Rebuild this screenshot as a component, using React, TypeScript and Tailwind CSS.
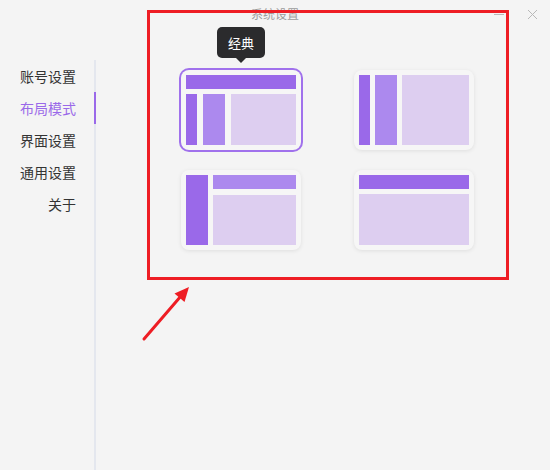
import { useState } from "react";

type Layout = "classic" | "columns" | "side" | "top";

const navItems = ["账号设置", "布局模式", "界面设置", "通用设置", "关于"];

function LayoutPreview({ kind }: { kind: Layout }) {
  if (kind === "classic") {
    return (
      <div className="flex flex-col gap-[5px] w-full h-full">
        <div className="h-[14px] bg-[#9a69e9]" />
        <div className="flex flex-1 gap-[6px]">
          <div className="w-[11px] bg-[#9a69e9]" />
          <div className="w-[22px] bg-[#ac89ee]" />
          <div className="flex-1 bg-[#ddcef0]" />
        </div>
      </div>
    );
  }
  if (kind === "columns") {
    return (
      <div className="flex gap-[5px] w-full h-full">
        <div className="w-[11px] bg-[#9a69e9]" />
        <div className="w-[22px] bg-[#ac89ee]" />
        <div className="flex-1 bg-[#ddcef0]" />
      </div>
    );
  }
  if (kind === "side") {
    return (
      <div className="flex gap-[5px] w-full h-full">
        <div className="w-[22px] bg-[#9a69e9]" />
        <div className="flex flex-1 flex-col gap-[6px]">
          <div className="h-[14px] bg-[#ac89ee]" />
          <div className="flex-1 bg-[#ddcef0]" />
        </div>
      </div>
    );
  }
  return (
    <div className="flex flex-col gap-[5px] w-full h-full">
      <div className="h-[14px] bg-[#9a69e9]" />
      <div className="flex-1 bg-[#ddcef0]" />
    </div>
  );
}

export default function App() {
  const [active] = useState(1);
  const [layout, setLayout] = useState<Layout>("classic");
  const cards: { kind: Layout; label: string }[] = [
    { kind: "classic", label: "经典" },
    { kind: "columns", label: "分栏" },
    { kind: "side", label: "侧边" },
    { kind: "top", label: "顶部" },
  ];

  return (
    <div
      className="relative w-[550px] h-[470px] overflow-hidden bg-[#f4f4f4] text-[#333]"
      style={{ fontFamily: '"Noto Sans CJK SC", "Noto Sans", sans-serif' }}
    >
      {/* title bar */}
      <div className="relative flex items-center justify-center h-[28px]">
        <span className="text-[12px] text-[#9c9c9c] leading-none">系统设置</span>
        <div className="absolute right-[12px] top-[9px] flex items-center gap-[23px]">
          <div className="w-[10px] h-px bg-[#b8b8b8]" />
          <svg width="11" height="11" viewBox="0 0 11 11" fill="none">
            <path d="M1 1L10 10M10 1L1 10" stroke="#b8b8b8" strokeWidth="1" />
          </svg>
        </div>
      </div>

      <div className="flex mt-[32px] h-[410px]">
        {/* sidebar */}
        <div className="w-[96px] border-r-2 border-[#e4e7ee] flex flex-col">
          {navItems.map((item, i) => (
            <div
              key={item}
              className={
                i === active
                  ? "-mr-[2px] h-8 flex items-center justify-end pr-[18px] border-r-2 border-[#9a69e9] text-[14px] text-[#9a69e9]"
                  : "-mr-[2px] h-8 flex items-center justify-end pr-[18px] border-r-2 border-transparent text-[14px] text-[#333]"
              }
            >
              {item}
            </div>
          ))}
        </div>

        {/* content */}
        <div className="pl-[85px] pt-[10px]">
          <div className="grid grid-cols-[120px_120px] gap-x-[53px] gap-y-[20px]">
            {cards.map((c) => (
              <button
                key={c.kind}
                onClick={() => setLayout(c.kind)}
                className={
                  layout === c.kind
                    ? "relative w-[120px] h-[80px] p-[5px] rounded-lg bg-[#f6f6f6] ring-2 ring-[#a071ec]"
                    : "relative w-[120px] h-[80px] p-[5px] rounded-lg bg-[#f6f6f6] shadow-[0_1px_4px_rgba(0,0,0,0.09)]"
                }
              >
                <LayoutPreview kind={c.kind} />
                {layout === c.kind && (
                  <div className="absolute left-1/2 -translate-x-1/2 -top-[43px] flex flex-col items-center">
                    <div className="w-[48px] h-[31px] rounded-[5px] bg-[#2b2b2d] text-white text-[13px] flex items-center justify-center">
                      {c.label}
                    </div>
                    <div className="w-0 h-0 border-x-[5px] border-x-transparent border-t-[5px] border-t-[#2b2b2d]" />
                  </div>
                )}
              </button>
            ))}
          </div>
        </div>
      </div>

      {/* annotation */}
      <div className="absolute left-[147px] top-[10px] w-[362px] h-[270px] border-[3px] border-[#ee1d24] pointer-events-none" />
      <svg
        className="absolute left-0 top-0 pointer-events-none"
        width="550"
        height="470"
        viewBox="0 0 550 470"
      >
        <line x1="144" y1="339" x2="181" y2="296" stroke="#ee1d24" strokeWidth="3" strokeLinecap="round" />
        <polygon points="189,287 184.5,302 174.5,293.5" fill="#ee1d24" />
      </svg>
    </div>
  );
}
